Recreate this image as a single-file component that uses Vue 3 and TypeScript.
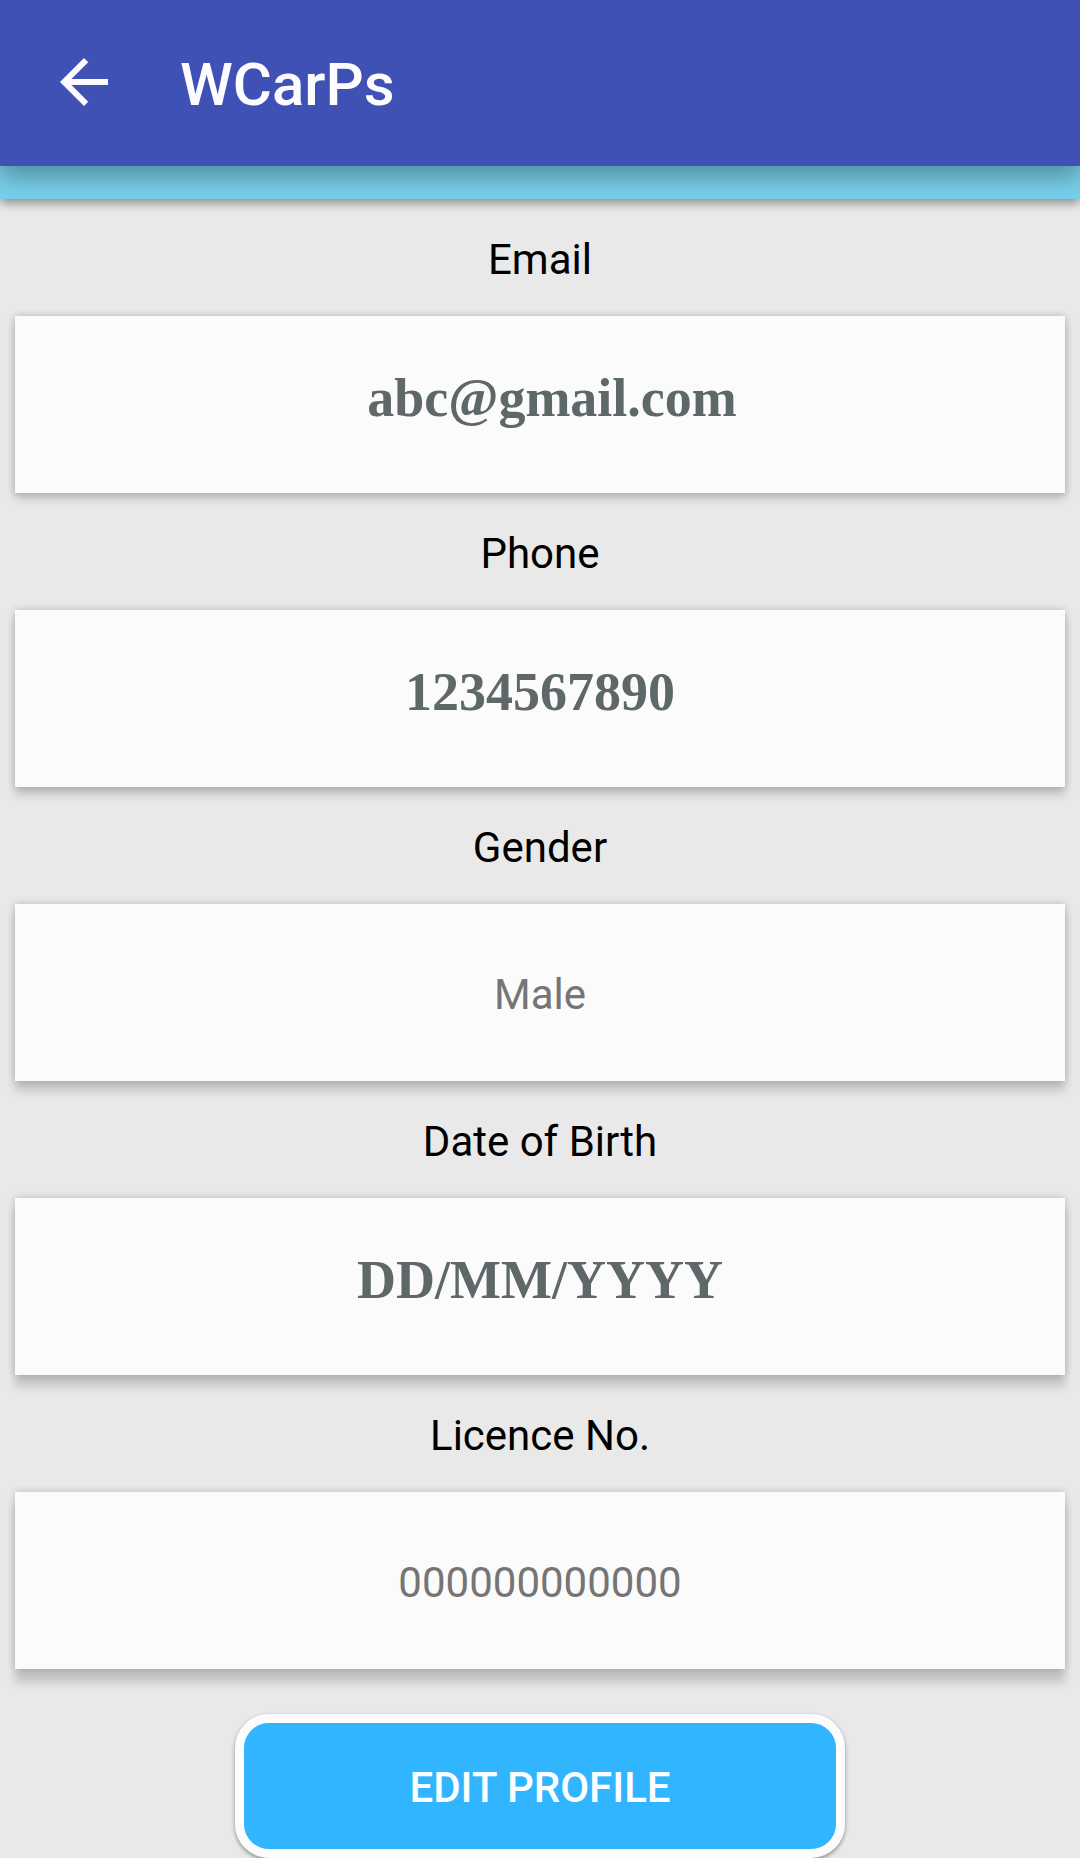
<script setup lang="ts">
interface Field {
  label: string
  value: string
  style: 'filled' | 'plain'
  email?: boolean
}

const fields: Field[] = [
  { label: 'Email', value: 'abc@gmail.com', style: 'filled', email: true },
  { label: 'Phone', value: '1234567890', style: 'filled' },
  { label: 'Gender', value: 'Male', style: 'plain' },
  { label: 'Date of Birth', value: 'DD/MM/YYYY', style: 'filled' },
  { label: 'Licence No.', value: '000000000000', style: 'plain' },
]

function cardShadow(index: number): string {
  const drop = 6 + index * 2
  return `0 ${drop}px 9px rgba(0, 0, 0, 0.16), 0 0 8px rgba(0, 0, 0, 0.2)`
}
</script>

<template>
  <div class="screen">
    <header class="app-bar">
      <button class="back" type="button" aria-label="Back">
        <svg viewBox="0 0 24 24" width="72" height="72" aria-hidden="true">
          <path fill="currentColor" d="M20 11H7.83l5.59-5.59L12 4l-8 8 8 8 1.41-1.41L7.83 13H20v-2z" />
        </svg>
      </button>
      <h1 class="title">WCarPs</h1>
    </header>
    <div class="banner"></div>

    <main class="profile">
      <dl class="fields">
        <div v-for="(field, index) in fields" :key="field.label">
          <dt class="label">{{ field.label }}</dt>
          <dd
            class="card"
            :class="[field.style, { email: field.email }]"
            :style="{ boxShadow: cardShadow(index) }"
          >
            {{ field.value }}
          </dd>
        </div>
      </dl>
      <button class="edit" type="button">EDIT PROFILE</button>
    </main>
  </div>
</template>

<style>
body {
  margin: 0;
  background: #e9e9e9;
}
</style>

<style scoped>
.screen {
  font-family: Roboto, sans-serif;
  background: #e9e9e9;
}

.app-bar {
  position: relative;
  z-index: 2;
  display: flex;
  align-items: center;
  gap: 60px;
  height: 166px;
  padding: 0 48px 2px;
  box-sizing: border-box;
  background: #3f51b5;
  color: #fcfcff;
  box-shadow: 0 10px 24px rgba(0, 0, 0, 0.34);
}

.back {
  display: flex;
  padding: 0;
  border: 0;
  background: none;
  color: inherit;
}

.title {
  margin: 0;
  padding-top: 6px;
  font-size: 60px;
  line-height: 70px;
  font-weight: 500;
}

.banner {
  position: relative;
  z-index: 1;
  height: 33px;
  background: #78d0ea;
  box-shadow: 0 4px 10px rgba(0, 0, 0, 0.4);
}

.profile {
  display: flex;
  flex-direction: column;
  align-items: center;
}

.fields {
  align-self: stretch;
  margin: 0;
  padding: 0 15px;
}

.label {
  height: 117px;
  font-size: 42px;
  line-height: 121px;
  text-align: center;
  color: #000;
}

.card {
  display: flex;
  align-items: center;
  justify-content: center;
  box-sizing: border-box;
  height: 177px;
  margin: 0;
  background: #fbfbfb;
}

.plain {
  padding-top: 4px;
  font-size: 42px;
  line-height: 50px;
  color: #757575;
}

.filled {
  padding-bottom: 14px;
  font-family: "Liberation Serif", serif;
  font-size: 54px;
  line-height: 62px;
  font-weight: 700;
  color: #5f6868;
}

.email {
  padding-left: 24px;
}

.edit {
  width: 58%;
  max-width: 610px;
  height: 144px;
  margin: 45px 0 0;
  padding: 4px 0 0;
  border: 9px solid #fcfcfc;
  border-radius: 34px;
  background: #31b5ff;
  box-shadow: 0 2px 4px rgba(0, 0, 0, 0.4);
  font-family: inherit;
  font-size: 42px;
  line-height: 50px;
  font-weight: 500;
  color: #fcffff;
}
</style>
